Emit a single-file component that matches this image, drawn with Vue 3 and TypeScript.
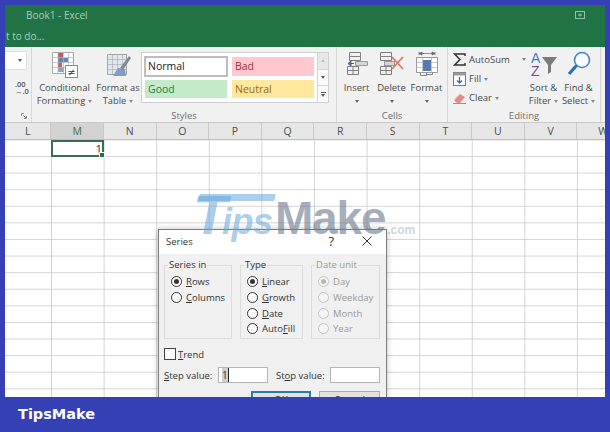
<script setup lang="ts">
const cols: string[] = ['L', 'M', 'N', 'O', 'P', 'Q', 'R', 'S', 'T', 'U', 'V', 'W']
const seriesIn = [
  { pre: '', key: 'R', post: 'ows', on: true },
  { pre: '', key: 'C', post: 'olumns', on: false },
]
const types = [
  { pre: '', key: 'L', post: 'inear', on: true },
  { pre: '', key: 'G', post: 'rowth', on: false },
  { pre: '', key: 'D', post: 'ate', on: false },
  { pre: 'Auto', key: 'F', post: 'ill', on: false },
]
const units = [
  { label: 'Day', on: true },
  { label: 'Weekday', on: false },
  { label: 'Month', on: false },
  { label: 'Year', on: false },
]
</script>

<template>
  <div class="page">
    <div class="window">
      <header class="titlebar">
        <div class="title-row">
          <span>Book1 - Excel</span>
          <svg class="restore" width="10" height="8" viewBox="0 0 10 8">
            <rect x="0.5" y="0.5" width="9" height="7" fill="none" stroke="#8fc2a4" />
            <path d="M3 4h4M5 2.5v3" stroke="#8fc2a4" />
          </svg>
        </div>
        <div class="tell-row">t to do...</div>
      </header>

      <section class="ribbon">
        <div class="group g-number">
          <div class="group-main">
            <div class="dropdown"><span class="caret dark"></span></div>
            <div class="decimals"><span>.00</span><span>→.0</span></div>
          </div>
          <div class="group-label launcher">
            <svg width="6" height="6" viewBox="0 0 6 6"><path d="M.5 3V.5H3M2 2l3 3M3 5.5h2.5V3" fill="none" stroke="#777" stroke-width=".8" /></svg>
          </div>
        </div>

        <div class="group g-styles">
          <div class="group-main styles-main">
            <div class="tool w-cond">
              <div class="tool-icon">
                <svg width="27" height="27" viewBox="0 0 27 27">
                  <path d="M1.5 1.5h21v21h-21z" fill="#fff" stroke="#a8a8a8" />
                  <rect x="7" y="2" width="5" height="5" fill="#c0605d" />
                  <rect x="7" y="7" width="10" height="4" fill="#5f84ba" />
                  <rect x="7" y="11" width="4" height="5" fill="#c0605d" />
                  <rect x="7" y="16" width="6" height="5" fill="#8aa4cc" />
                  <path d="M1.5 6.5h21M1.5 11.5h21M1.5 16.5h21M7 1.500v21M12.500 1.500v21M17.500 1.500v21" fill="none" stroke="#b4b4b4" stroke-width=".7" />
                  <rect x="14.5" y="14.5" width="12" height="12" fill="#fff" stroke="#888" />
                  <text x="20.5" y="24.5" text-anchor="middle" class="svg-ne">≠</text>
                </svg>
              </div>
              <div class="tool-text">Conditional</div>
              <div class="tool-text">Formatting<span class="caret"></span></div>
            </div>
            <div class="tool w-table">
              <div class="tool-icon">
                <svg width="25" height="25" viewBox="0 0 25 25">
                  <path d="M1.5 1.5h19v20h-19z" fill="#dfe6f0" stroke="#a5a5a5" />
                  <path d="M1.5 6.5h19M1.5 11.5h19M1.5 16.5h19M6.500 1.500v20M11.500 1.500v20M16.500 1.500v20" fill="none" stroke="#b0b0b0" stroke-width=".7" />
                  <path d="M7 23l5-8 7 1 1 7z" fill="#7f9cc4" />
                  <path d="M14 15L23 3l2 2-8 12z" fill="#7d8b95" />
                </svg>
              </div>
              <div class="tool-text">Format as</div>
              <div class="tool-text">Table<span class="caret"></span></div>
            </div>
            <div class="gallery">
              <div class="cells">
                <div class="style-cell normal">Normal</div>
                <div class="style-cell bad">Bad</div>
                <div class="style-cell good">Good</div>
                <div class="style-cell neutral">Neutral</div>
              </div>
              <div class="gallery-scroll">
                <div class="scroll-btn up"><span class="caret up-c"></span></div>
                <div class="scroll-btn"><span class="caret dark"></span></div>
                <div class="scroll-btn more"><i></i><span class="caret dark"></span></div>
              </div>
            </div>
          </div>
          <div class="group-label">Styles</div>
        </div>

        <div class="group g-cells">
          <div class="group-main tools-row">
            <div class="tool w-cell">
              <div class="tool-icon">
                <svg width="23" height="24" viewBox="0 0 23 24">
                  <path d="M4.500 1.500h11v4h-11zM4.500 5.500h11v4h-11zM2.500 15.500h11v8h-11zM8 15.500v8M2.500 19.500h11" fill="none" stroke="#808080" />
                  <path d="M10.500 10.500h12v4h-12z" fill="#d6d6d6" stroke="#999" />
                  <path d="M3 12.500h6M3 12.500l3-2.500v5z" fill="#3d6ea8" stroke="#3d6ea8" />
                </svg>
              </div>
              <div class="tool-text">Insert</div>
              <div class="tool-text"><span class="caret solo"></span></div>
            </div>
            <div class="tool w-cell">
              <div class="tool-icon">
                <svg width="26" height="24" viewBox="0 0 26 24">
                  <path d="M1.500 1.500h11v4h-11zM1.500 5.500h11v4h-11zM1.500 15.500h11v8h-11zM7 15.500v8M1.500 19.500h11" fill="none" stroke="#808080" />
                  <rect x="5.500" y="10.500" width="10" height="4" fill="#d6d6d6" stroke="#999" />
                  <path d="M13 6l11 12M24 6L13 18" stroke="#d9795f" stroke-width="1.800" fill="none" />
                </svg>
              </div>
              <div class="tool-text">Delete</div>
              <div class="tool-text"><span class="caret solo"></span></div>
            </div>
            <div class="tool w-cell">
              <div class="tool-icon">
                <svg width="24" height="27" viewBox="0 0 24 27">
                  <path d="M4 2.500h16M4 1v3M20 1v3M4 2.500l3-1.500v3zM20 2.500L17 1v3z" fill="#666" stroke="#666" stroke-width=".7" />
                  <path d="M1.500 6.500h21v15h-21z" fill="#fff" stroke="#999" />
                  <path d="M7.500 6.500v15M16.500 6.500v15M1.500 11.500h21M1.500 16.500h21" fill="none" stroke="#b4b4b4" stroke-width=".7" />
                  <rect x="8" y="9" width="8" height="11" fill="#5679b0" />
                  <path d="M5.500 21.500v3h6v-3M11.500 23.500h6v-2" fill="none" stroke="#888" />
                </svg>
              </div>
              <div class="tool-text">Format</div>
              <div class="tool-text"><span class="caret solo"></span></div>
            </div>
          </div>
          <div class="group-label">Cells</div>
        </div>

        <div class="group g-editing">
          <div class="group-main tools-row">
            <div class="edit-list">
              <div class="edit-row">
                <svg width="13" height="13" viewBox="0 0 13 13"><path d="M12 3V1H1.500L7 6.500 1.500 12H12v-2" fill="none" stroke="#333" stroke-width="1.500" /></svg>
                <span>AutoSum</span><span class="caret wide"></span>
              </div>
              <div class="edit-row">
                <svg width="13" height="14" viewBox="0 0 13 14"><rect x=".5" y=".5" width="12" height="13" fill="#fff" stroke="#777" /><rect x=".5" y=".5" width="12" height="3" fill="#999" /><path d="M6.500 5v6M4 8.500l2.500 2.500L9 8.500" fill="none" stroke="#2f6ea9" stroke-width="1.300" /></svg>
                <span>Fill<span class="caret"></span></span>
              </div>
              <div class="edit-row">
                <svg width="13" height="12" viewBox="0 0 13 12"><path d="M1 8l6-6 5 3-5 6H4z" fill="#e58a87" /><path d="M0 11.500h13" stroke="#d07a78" /></svg>
                <span>Clear<span class="caret"></span></span>
              </div>
            </div>
            <div class="tool w-sort">
              <div class="tool-icon">
                <svg width="28" height="27" viewBox="0 0 28 27">
                  <text x="1" y="12" class="svg-a">A</text>
                  <text x="1" y="25" class="svg-z">Z</text>
                  <path d="M12 6h15l-6 8v7l-3 2v-9z" fill="#7b7b7b" />
                </svg>
              </div>
              <div class="tool-text">Sort &amp;</div>
              <div class="tool-text">Filter<span class="caret"></span></div>
            </div>
            <div class="tool w-sort">
              <div class="tool-icon">
                <svg width="24" height="25" viewBox="0 0 24 25">
                  <circle cx="15" cy="9" r="7.500" fill="#f7fbff" stroke="#4a84c4" stroke-width="1.600" />
                  <path d="M9.500 14.500L2 23" stroke="#2f6fb4" stroke-width="3.200" />
                </svg>
              </div>
              <div class="tool-text">Find &amp;</div>
              <div class="tool-text">Select<span class="caret"></span></div>
            </div>
          </div>
          <div class="group-label">Editing</div>
        </div>
      </section>

      <div class="col-heads">
        <span v-for="c in cols" :key="c" class="col-head" :class="{ first: c === 'L', active: c === 'M' }">{{ c }}</span>
      </div>

      <main class="sheet">
        <div class="selected">1<i></i></div>

        <div class="dialog">
          <div class="dialog-title">
            <span>Series</span>
            <span class="help">?</span>
            <svg class="close" width="10" height="10" viewBox="0 0 10 10"><path d="M.5.500l9 9M9.500.500l-9 9" stroke="#333" /></svg>
          </div>
          <div class="dialog-body">
            <div class="fields">
              <fieldset class="w-series">
                <legend>Series in</legend>
                <div v-for="o in seriesIn" :key="o.key" class="opt">
                  <span class="radio" :class="{ on: o.on }"></span>
                  <span>{{ o.pre }}<u>{{ o.key }}</u>{{ o.post }}</span>
                </div>
              </fieldset>
              <fieldset class="w-type">
                <legend>Type</legend>
                <div v-for="o in types" :key="o.key" class="opt">
                  <span class="radio" :class="{ on: o.on }"></span>
                  <span>{{ o.pre }}<u>{{ o.key }}</u>{{ o.post }}</span>
                </div>
              </fieldset>
              <fieldset class="w-unit disabled">
                <legend>Date unit</legend>
                <div v-for="o in units" :key="o.label" class="opt">
                  <span class="radio" :class="{ on: o.on }"></span>
                  <span>{{ o.label }}</span>
                </div>
              </fieldset>
            </div>
            <div class="trend"><span class="check"></span><span><u>T</u>rend</span></div>
            <div class="values">
              <span class="val-label first-label"><u>S</u>tep value:</span>
              <span class="input"><b>1</b></span>
              <span class="val-label second-label">St<u>o</u>p value:</span>
              <span class="input"></span>
            </div>
            <div class="buttons">
              <span class="btn ok">OK</span>
              <span class="btn">Cancel</span>
            </div>
          </div>
        </div>

        <div class="watermark">
          <span class="wm-t">T</span><span class="wm-ips">ips</span><span class="wm-make">Make</span><span class="wm-com">.com</span>
        </div>
      </main>
    </div>
    <footer class="footer">TipsMake</footer>
  </div>
</template>

<style>
html, body { margin: 0; background: #3540b5; }
</style>

<style scoped>
.page { width: 610px; height: 432px; box-sizing: border-box; padding: 5px 5px 0; background: #3540b5; font-family: "Open Sans", "Noto Sans", sans-serif; overflow: hidden; }
.window { width: 600px; height: 392px; background: #fff; overflow: hidden; display: flex; flex-direction: column; }
.titlebar { height: 42px; flex: none; background: #217346; color: #a5d0b5; font-size: 10px; }
.title-row { height: 20px; padding: 0 20px 0 21px; display: flex; align-items: center; justify-content: space-between; }
.tell-row { height: 22px; line-height: 22px; padding-left: 1px; }
.ribbon { height: 76px; flex: none; display: flex; background: #f1f1f1; box-sizing: border-box; border-bottom: 1px solid #c9c9c9; color: #4a4a4a; }
.group { display: flex; flex-direction: column; box-sizing: border-box; border-right: 1px solid #d6d6d6; }
.group-main { height: 62px; flex: none; }
.group-label { height: 13px; line-height: 13px; text-align: center; font-size: 9.500px; color: #707070; }
.g-number { width: 27px; }
.dropdown { width: 22px; height: 19px; margin-top: 4px; background: #fff; border: 1px solid #dedede; border-left: 0; box-sizing: border-box; display: flex; align-items: center; justify-content: flex-end; padding-right: 4px; }
.decimals { margin: 11px 0 0 10px; display: flex; flex-direction: column; font-size: 7.500px; line-height: 6.500px; font-weight: 600; color: #555; }
.launcher { display: flex; justify-content: flex-end; align-items: center; padding-right: 4px; }
.g-styles { width: 305px; }
.styles-main { display: flex; padding-left: 1px; }
.tool { display: flex; flex-direction: column; align-items: center; padding-top: 4px; flex: none; }
.tool-icon { height: 30px; display: flex; justify-content: center; align-items: flex-start; }
.tool-text { height: 13px; line-height: 13px; font-size: 9.500px; white-space: nowrap; color: #4a4a4a; }
.w-cond { width: 63px; }
.w-table { width: 44px; }
.w-table .tool-icon { padding-top: 2px; height: 28px; }
.w-table .tool-text { font-size: 9.300px; }
.caret { display: inline-block; width: 0; height: 0; margin-left: 3px; vertical-align: middle; border-left: 2.500px solid transparent; border-right: 2.500px solid transparent; border-top: 3px solid #8a8a8a; }
.caret.dark { border-top-color: #555; margin: 0; }
.caret.solo { margin: 0; border-top-color: #666; }
.caret.wide { margin-left: 9px; }
.caret.up-c { margin: 0; border-top: 0; border-bottom: 3px solid #bbb; }
.gallery { width: 188px; height: 51px; margin: 5px 0 0 1px; box-sizing: border-box; border: 1px solid #cfcfcf; background: #fff; display: flex; }
.cells { width: 176px; display: grid; grid-template-columns: 84px 84px; grid-template-rows: 21px 20px; column-gap: 3px; row-gap: 2px; padding: 3px 0 0 2px; box-sizing: border-box; }
.style-cell { font-size: 10.500px; line-height: 18px; padding-left: 3px; margin: 1px; box-sizing: border-box; }
.normal { border: 2px solid #bdbdbd; margin: 0; line-height: 17px; padding-left: 2px; color: #222; }
.bad { background: #ffc7ce; color: #9c3040; }
.good { background: #c3ebca; color: #2c7a3a; }
.neutral { background: #ffe79c; color: #9c6a10; }
.gallery-scroll { width: 10px; margin-left: 0; display: flex; flex-direction: column; border-left: 1px solid #d4d4d4; }
.scroll-btn { flex: 1; display: flex; flex-direction: column; align-items: center; justify-content: center; border-bottom: 1px solid #d4d4d4; background: #fafafa; }
.scroll-btn.up { background: #e8e8e8; }
.scroll-btn.more { border-bottom: 0; gap: 1px; }
.scroll-btn.more i { width: 5px; height: 1px; background: #555; }
.tools-row { display: flex; }
.g-cells { width: 111px; }
.g-cells .tools-row { padding-left: 2px; }
.w-cell { width: 35px; }
.g-editing { width: 153px; border-right: 1px solid #d6d6d6; }
.edit-list { width: 78px; padding: 6px 0 0 5px; box-sizing: border-box; display: flex; flex-direction: column; gap: 6px; }
.edit-row { height: 13px; display: flex; align-items: center; gap: 3px; font-size: 9.500px; white-space: nowrap; }
.w-sort { width: 35px; }
.col-heads { height: 16px; flex: none; display: flex; background: #e6e6e6; border-bottom: 1px solid #bdbdbd; overflow: hidden; color: #4d4d4d; font-size: 10.500px; }
.col-head { flex: none; width: 52.600px; box-sizing: border-box; border-right: 1px solid #c8c8c8; text-align: center; line-height: 16px; }
.col-head.first { width: 46.400px; }
.col-head.active { background: #d2d2d2; color: #3d6b52; border-bottom: 1px solid #217346; height: 17px; }
.sheet { position: relative; flex: 1; min-height: 0; overflow: hidden; background-color: #fff; background-image: linear-gradient(to right, #d4d4d4 1px, transparent 1px), linear-gradient(to bottom, #d4d4d4 1px, transparent 1px); background-size: 52.600px 16.600px; background-position: 46px 0, 0 16px; }
.selected { position: absolute; left: 46px; top: 0; width: 53px; height: 17px; box-sizing: border-box; border: 2px solid #3f6b55; color: #333; font-size: 11.500px; line-height: 14px; text-align: right; }
.selected i { position: absolute; right: -3px; bottom: -3px; width: 4px; height: 4px; background: #217346; border: 1px solid #fff; }
.watermark { position: absolute; z-index: 2; left: 188px; top: 46px; display: flex; align-items: baseline; white-space: nowrap; font-family: "Liberation Sans", Arial, sans-serif; font-weight: 700; font-style: italic; height: 58px; line-height: 58px; }
.wm-t { position: relative; font-size: 56px; color: rgba(100, 165, 220, .55); width: 29px; }
.wm-t::after { content: ""; position: absolute; left: 6px; top: 8px; width: 76px; height: 7px; background: rgba(100, 165, 220, .55); transform: skewX(-12deg); }
.wm-ips { font-size: 36px; color: rgba(100, 165, 220, .55); letter-spacing: -.5px; width: 53px; }
.wm-make { font-size: 46px; font-style: normal; color: rgba(105, 120, 140, .6); letter-spacing: -1.200px; }
.wm-com { font-size: 12px; font-style: normal; color: rgba(150, 170, 190, .5); margin-left: 2px; }
.dialog { position: absolute; left: 153px; top: 89px; width: 229px; height: 200px; box-sizing: border-box; border: 1px solid #7d7d7d; box-shadow: 0 0 6px rgba(0,0,0,.25); background: #f0f0f0; color: #333; font-size: 9.500px; }
.dialog-title { height: 24px; background: #fff; display: flex; align-items: center; padding: 0 14px 2px 7px; box-sizing: border-box; }
.help { margin-left: auto; font-size: 13px; margin-right: 28px; }
.dialog-body { padding: 5px 6px 0 5px; }
.fields { display: flex; gap: 8px; }
fieldset { margin: 0; padding: 3px 0 0 6px; border: 1px solid #dcdcdc; height: 80px; box-sizing: border-box; min-width: 0; }
legend { padding: 0 1px; margin-left: -3px; line-height: 12px; font-size: 9.500px; color: #333; }
.w-series { width: 68px; }
.w-type { width: 63px; }
.w-unit { width: 69px; }
.opt { height: 15.700px; display: flex; align-items: center; gap: 4px; white-space: nowrap; }
.radio { width: 11px; height: 11px; flex: none; box-sizing: border-box; border: 1px solid #333; border-radius: 50%; background: #fff; display: flex; align-items: center; justify-content: center; }
.radio.on::after { content: ""; width: 5px; height: 5px; border-radius: 50%; background: #333; }
.disabled, .disabled legend { color: #9a9a9a; }
.disabled .radio { border-color: #c4c4c4; background: #f4f4f4; }
.disabled .radio.on::after { background: #b5b5b5; }
.trend { margin-top: 9px; height: 12px; display: flex; align-items: center; gap: 2px; }
.check { width: 12px; height: 12px; box-sizing: border-box; border: 1px solid #444; background: #fff; }
.values { margin-top: 7px; display: flex; align-items: center; height: 16px; }
.val-label { white-space: nowrap; }
.first-label { width: 54px; }
.second-label { width: 54px; margin-left: 8px; }
.input { width: 50px; height: 16px; box-sizing: border-box; border: 1px solid #b5b5b5; background: #fff; padding-left: 3px; line-height: 14px; font-size: 10px; }
.input b { font-weight: 400; background: #cfcfcf; border-right: 1px solid #222; }
.buttons { margin-top: 8px; display: flex; justify-content: flex-end; gap: 8px; }
.btn { width: 61px; height: 23px; box-sizing: border-box; border: 1px solid #adadad; background: #e1e1e1; text-align: center; line-height: 14px; padding-top: 1px; font-size: 10px; }
.btn.ok { width: 60px; border: 2px solid #2a7aa8; padding-top: 0; }
.footer { height: 35px; box-sizing: border-box; padding-left: 13px; line-height: 35px; color: #fff; font-family: "DejaVu Sans", Verdana, sans-serif; font-weight: 700; font-size: 14.500px; }
.svg-ne { font-size: 10px; fill: #333; font-family: "DejaVu Sans", sans-serif; }
.svg-a { font-size: 14px; fill: #3f7fc1; font-family: "Liberation Sans", sans-serif; }
.svg-z { font-size: 14px; fill: #7a4f9e; font-family: "Liberation Sans", sans-serif; }
</style>
